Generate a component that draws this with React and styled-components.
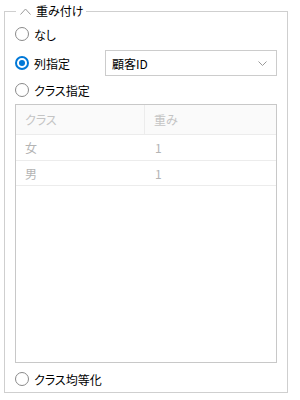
import React from 'react';
import styled, { createGlobalStyle } from 'styled-components';

const GlobalStyle = createGlobalStyle`
body {
  margin: 0;
  background: #fff;
  font-family: "Noto Sans CJK JP", "Noto Sans", sans-serif;
  font-feature-settings: "palt";
  color: #000;
}
#root {
  width: 300px;
  height: 400px;
  overflow: hidden;
}
`;

const Group = styled.fieldset`
box-sizing: border-box;
width: 284px;
height: 390px;
margin: 3px 0 0 4px;
padding: 0;
border: 1px solid #cfcfcf;
min-width: 0;
`;

const Legend = styled.legend`
display: flex;
align-items: center;
gap: 5px;
margin-left: 11px;
padding: 0 3px 0 4px;
font-size: 12px;
line-height: 16px;
color: #000;
`;

const Content = styled.div`
display: flex;
flex-direction: column;
height: 100%;
padding: 4px 10px 0 10px;
box-sizing: border-box;
`;

const Row = styled.label`
display: flex;
align-items: center;
height: ${p => p.$h || 22}px;
margin-top: ${p => p.$mt || 0}px;
font-size: 12px;
`;

const Circle = styled.span`
box-sizing: border-box;
width: 14px;
height: 14px;
border-radius: 50%;
border: ${p => (p.$on ? '2px solid #0078d7' : '1px solid #8a8a8a')};
display: flex;
align-items: center;
justify-content: center;
margin-right: 5px;
flex-shrink: 0;
&::after {
  content: '';
  display: ${p => (p.$on ? 'block' : 'none')};
  width: 6px;
  height: 6px;
  border-radius: 50%;
  background: #0078d7;
}
`;

const LabelText = styled.span`
width: ${p => p.$w || 'auto'};
`;

const Select = styled.div`
box-sizing: border-box;
flex: 1;
height: 26px;
border: 1px solid #cccccc;
display: flex;
align-items: center;
justify-content: space-between;
padding: 0 9px 0 6px;
font-size: 12px;
`;

const Table = styled.div`
box-sizing: border-box;
margin-top: 3px;
height: 259px;
border: 1px solid #c8c8c8;
display: flex;
flex-direction: column;
`;

const HeadRow = styled.div`
display: grid;
grid-template-columns: 129px 1fr;
height: 29px;
background: #fafafa;
border-bottom: 1px solid #ececec;
`;

const HeadCell = styled.div`
display: flex;
align-items: center;
padding-left: 9px;
font-size: 12px;
color: #c4c4c4;
border-right: ${p => (p.$divider ? '1px solid #ececec' : 'none')};
`;

const BodyRow = styled.div`
display: grid;
grid-template-columns: 130px 1fr;
height: ${p => p.$h}px;
border-bottom: 1px solid #ececec;
`;

const Cell = styled.div`
display: flex;
align-items: center;
padding-left: 9px;
font-size: 12px;
color: #b4b4b4;
`;

const Chevron = ({ up }) => (
  <svg width="11" height="7" viewBox="0 0 11 7">
    <polyline
      points={up ? '0.5,6.5 5.5,1 10.5,6.5' : '0.5,0.5 5.5,6 10.5,0.5'}
      fill="none"
      stroke="#9a9a9a"
      strokeWidth="1"
    />
  </svg>
);

const SmallChevron = () => (
  <svg width="9" height="5" viewBox="0 0 9 5">
    <polyline points="0.5,0.5 4.5,4.5 8.5,0.5" fill="none" stroke="#9a9a9a" strokeWidth="1" />
  </svg>
);

export default function App() {
  return (
    <>
      <GlobalStyle />
      <Group>
        <Legend>
          <Chevron up />
          <span>重み付け</span>
        </Legend>
        <Content>
          <Row $mt={0}>
            <Circle />
            <LabelText>なし</LabelText>
          </Row>
          <Row $h={26} $mt={5}>
            <Circle $on />
            <LabelText $w="71px">列指定</LabelText>
            <Select>
              <span>顧客ID</span>
              <SmallChevron />
            </Select>
          </Row>
          <Row $mt={3}>
            <Circle />
            <LabelText>クラス指定</LabelText>
          </Row>
          <Table>
            <HeadRow>
              <HeadCell $divider>クラス</HeadCell>
              <HeadCell>重み</HeadCell>
            </HeadRow>
            <BodyRow $h={25}>
              <Cell>女</Cell>
              <Cell>1</Cell>
            </BodyRow>
            <BodyRow $h={24}>
              <Cell>男</Cell>
              <Cell>1</Cell>
            </BodyRow>
          </Table>
          <Row $mt={5}>
            <Circle />
            <LabelText>クラス均等化</LabelText>
          </Row>
        </Content>
      </Group>
    </>
  );
}
